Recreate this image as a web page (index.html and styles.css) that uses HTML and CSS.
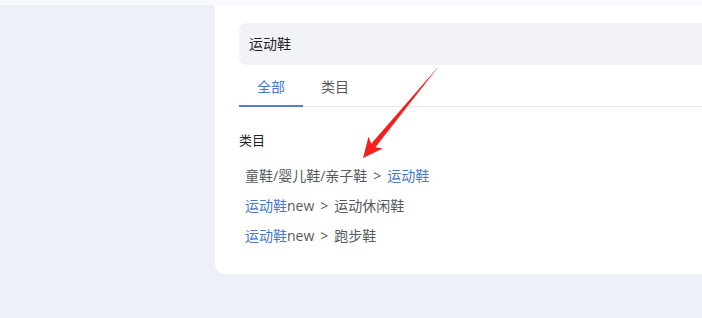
FILE: index.html
```html
<!DOCTYPE html>
<html lang="zh-CN">
<head>
    <meta charset="UTF-8">
    <meta name="viewport" content="width=device-width, initial-scale=1.0">
    <title>搜索</title>
    <link rel="stylesheet" href="styles.css">
</head>
<body>
    <div class="page">
        <div class="panel">
            <div class="search-box">运动鞋</div>

            <div class="tabs">
                <div class="tab active">全部</div>
                <div class="tab">类目</div>
            </div>

            <div class="section-title">类目</div>
            <ul class="result-list">
                <li>童鞋/婴儿鞋/亲子鞋<span class="sep">&gt;</span><span class="hit">运动鞋</span></li>
                <li><span class="hit">运动鞋</span>new<span class="sep">&gt;</span>运动休闲鞋</li>
                <li><span class="hit">运动鞋</span>new<span class="sep">&gt;</span>跑步鞋</li>
            </ul>

            <svg class="arrow" width="100" height="110" viewBox="355 60 100 110">
                <polygon points="438.6,66.6 375.4,147.3 382.8,148.6 363,158 368.6,136.6 371.2,143.8 437.6,67.4" fill="#f2211b"/>
            </svg>
        </div>
    </div>
</body>
</html>
```

FILE: styles.css
```css
:root {
    --bg: #eef0f7;
    --blue: #4a78c8;
    --text: #555a60;
    --dark: #1f2329;
    --line: #e4e6eb;
}

* {
    box-sizing: border-box;
    margin: 0;
    padding: 0;
    font-family: "Open Sans", "Noto Sans CJK SC", sans-serif;
}

body {
    background-color: var(--bg);
    overflow: hidden;
}

.page {
    padding: 5px 0 0 215px;
    background: linear-gradient(to bottom, #f8f9fc 0, #f8f9fc 5px, var(--bg) 5px);
    height: 318px;
}

.panel {
    position: relative;
    height: 269px;
    overflow: hidden;
    background: #fff;
    border-radius: 0 0 0 10px;
    padding: 18px 0 0 24px;
}

.search-box {
    height: 42px;
    line-height: 42px;
    margin-right: -20px;
    padding-left: 10px;
    background: #f2f3f7;
    border-radius: 8px;
    font-size: 14px;
    color: var(--dark);
}

.tabs {
    display: flex;
    height: 42px;
    border-bottom: 1px solid var(--line);
}

.tab {
    padding: 2px 18px 0;
    line-height: 39px;
    font-size: 14px;
    color: var(--text);
}

.tab.active {
    color: var(--blue);
    border-bottom: 2px solid #5280c8;
    height: 42px;
}

.section-title {
    margin-top: 23px;
    line-height: 20px;
    font-size: 13px;
    color: var(--dark);
}

.result-list {
    list-style: none;
    margin-top: 11px;
    padding-left: 6px;
}

.result-list li {
    line-height: 30px;
    font-size: 14px;
    color: var(--text);
}

.sep {
    margin: 0 6px;
}

.hit {
    color: var(--blue);
}

.arrow {
    position: absolute;
    left: 140px;
    top: 55px;
}
```
